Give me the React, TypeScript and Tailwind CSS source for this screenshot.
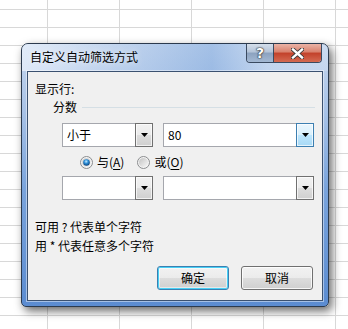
import React from "react";

function Arrow() {
  return (
    <svg width="7" height="4" viewBox="0 0 7 4">
      <path d="M0 0H7L3.5 4Z" fill="#000" />
    </svg>
  );
}

function Combo({ w, text, hot }: { w: string; text?: string; hot?: boolean }) {
  return (
    <div className={`flex h-[24px] ${w}`}>
      <div className="flex-1 flex items-center pl-[4px] bg-white border-y border-l border-[#a5a7ad] text-[12px] leading-[16px] text-black">
        {text}
      </div>
      {hot ? (
        <div className="w-[18px] h-full flex items-center justify-center border border-[#3c7fb1] bg-[linear-gradient(180deg,#eaf6fd_0%,#d9f0fc_50%,#bee6fd_50%,#a7d9f5_100%)] shadow-[inset_0_0_0_1px_rgba(255,255,255,0.7)]">
          <Arrow />
        </div>
      ) : (
        <div className="w-[18px] h-full flex items-center justify-center border border-[#707070] bg-[linear-gradient(180deg,#f2f2f2_0%,#ebebeb_50%,#dddddd_50%,#cfcfcf_100%)] shadow-[inset_0_0_0_1px_rgba(255,255,255,0.7)]">
          <Arrow />
        </div>
      )}
    </div>
  );
}

function RadioOn() {
  return (
    <svg width="13" height="13" viewBox="0 0 13 13">
      <defs>
        <linearGradient id="ringOn" x1="0" y1="0" x2="1" y2="1">
          <stop offset="0" stop-color="#c9c9c9" />
          <stop offset="1" stop-color="#f6f6f6" />
        </linearGradient>
        <radialGradient id="dotOn" cx="45%" cy="35%" r="65%">
          <stop offset="0" stop-color="#c7ebff" />
          <stop offset="0.45" stop-color="#2d8fd8" />
          <stop offset="1" stop-color="#0a3f78" />
        </radialGradient>
      </defs>
      <circle cx="6.5" cy="6.5" r="6" fill="#f4f4f4" stroke="#8a8c8e" />
      <circle cx="6.5" cy="6.5" r="4.6" fill="url(#ringOn)" />
      <circle cx="6.5" cy="6.5" r="3.3" fill="url(#dotOn)" />
    </svg>
  );
}

function RadioOff() {
  return (
    <svg width="13" height="13" viewBox="0 0 13 13">
      <defs>
        <linearGradient id="ringOff" x1="0" y1="0" x2="1" y2="1">
          <stop offset="0" stop-color="#c2c2c2" />
          <stop offset="1" stop-color="#f8f8f8" />
        </linearGradient>
      </defs>
      <circle cx="6.5" cy="6.5" r="6" fill="#f4f4f4" stroke="#8a8c8e" />
      <circle cx="6.5" cy="6.5" r="4.6" fill="url(#ringOff)" />
    </svg>
  );
}

export default function App() {
  return (
    <div className="w-[348px] h-[329px] overflow-hidden bg-white bg-[linear-gradient(to_right,#d8d8d8_1px,transparent_1px),linear-gradient(to_bottom,#d8d8d8_1px,transparent_1px)] bg-[length:72px_18px] bg-[position:47px_9px] pt-[43px] pl-[21px] font-['Noto_Sans_CJK_SC','Microsoft_YaHei',sans-serif]">
      <div className="w-[308px] h-[264px] flex flex-col rounded-t-[7px] rounded-b-[5px] border border-[#2b3a4e] shadow-[3px_4px_10px_rgba(0,0,0,0.6)] bg-[linear-gradient(180deg,#c6d7ee_0%,#a9c3e7_25%,#7aa4dc_55%,#5b8cd1_100%)] overflow-hidden">
        {/* title bar */}
        <div className="h-[27px] flex items-start bg-[linear-gradient(90deg,rgba(235,242,252,0.75)_0%,rgba(190,210,238,0.4)_30%,rgba(100,150,215,0.35)_62%,rgba(200,218,242,0.5)_80%,rgba(220,232,248,0.3)_100%)]">
          <div className="ml-[8px] mt-[5px] text-[12px] leading-[16px] text-black [text-shadow:0_0_6px_rgba(255,255,255,0.9)]">
            自定义自动筛选方式
          </div>
          <div className="ml-auto mr-[6px] flex h-[19px] rounded-b-[4px] border-x border-b border-[#3a4a60] overflow-hidden">
            <div className="w-[27px] h-full flex items-center justify-center border-r border-[#3a4a60] bg-[linear-gradient(180deg,#d4deea_0%,#b3c3d8_45%,#8ca2bf_50%,#a3b8d3_100%)]">
              <span className="text-white font-bold text-[14px] leading-[14px] font-['DejaVu_Sans',sans-serif] [text-shadow:0_0_1px_#2a2a2a,0_0_1px_#2a2a2a,0_0_2px_#2a2a2a]">
                ?
              </span>
            </div>
            <div className="w-[47px] h-full flex items-center justify-center bg-[linear-gradient(180deg,#eab3a6_0%,#d8806c_45%,#c2412a_50%,#d46a52_100%)]">
              <svg width="13" height="11" viewBox="0 0 13 11">
                <path d="M2 1.5L11 9.5M11 1.5L2 9.5" stroke="#3a3a3a" strokeWidth="4.2" strokeLinecap="square" />
                <path d="M2 1.5L11 9.5M11 1.5L2 9.5" stroke="#ffffff" strokeWidth="2.4" strokeLinecap="square" />
              </svg>
            </div>
          </div>
        </div>

        {/* content */}
        <div className="mx-[5px] h-[230px] flex flex-col bg-[#f0f0f0] border border-[#3b5170] shadow-[0_0_0_1px_rgba(255,255,255,0.45)] text-[12px] leading-[16px] text-black">
          <div className="mt-[9px] pl-[7px]">显示行:</div>
          <div className="mt-[2px] pl-[25px] pr-[7px] flex items-center">
            <span>分数</span>
            <div className="ml-[5px] flex-1 h-px bg-[#d5dfe5]" />
          </div>
          <div className="mt-[8px] pl-[34px] flex gap-[10px]">
            <Combo w="w-[91px]" text="小于" />
            <Combo w="w-[151px]" text="80" hot />
          </div>
          <div className="mt-[7px] pl-[52px] flex items-center h-[16px]">
            <RadioOn />
            <span className="ml-[4px]">
              与(<span className="underline underline-offset-2">A</span>)
            </span>
            <span className="ml-[13px] flex items-center">
              <RadioOff />
            </span>
            <span className="ml-[4px]">
              或(<span className="underline underline-offset-2">O</span>)
            </span>
          </div>
          <div className="mt-[6px] pl-[34px] flex gap-[10px]">
            <Combo w="w-[91px]" />
            <Combo w="w-[151px]" />
          </div>
          <div className="mt-[19px] pl-[7px]">可用 ? 代表单个字符</div>
          <div className="mt-[3px] pl-[7px]">用 * 代表任意多个字符</div>
          <div className="mt-[12px] pr-[9px] flex justify-end gap-[12px]">
            <div className="w-[72px] h-[24px] flex items-center justify-center rounded-[3px] border border-[#3c7fb1] bg-[linear-gradient(180deg,#f2f2f2_0%,#ebebeb_50%,#dddddd_50%,#cfcfcf_100%)] shadow-[inset_0_0_0_1px_#48d0f5,inset_0_0_0_2px_rgba(255,255,255,0.5)]">
              确定
            </div>
            <div className="w-[72px] h-[24px] flex items-center justify-center rounded-[3px] border border-[#707070] bg-[linear-gradient(180deg,#f2f2f2_0%,#ebebeb_50%,#dddddd_50%,#cfcfcf_100%)] shadow-[inset_0_0_0_1px_rgba(255,255,255,0.8)]">
              取消
            </div>
          </div>
        </div>
      </div>
    </div>
  );
}
